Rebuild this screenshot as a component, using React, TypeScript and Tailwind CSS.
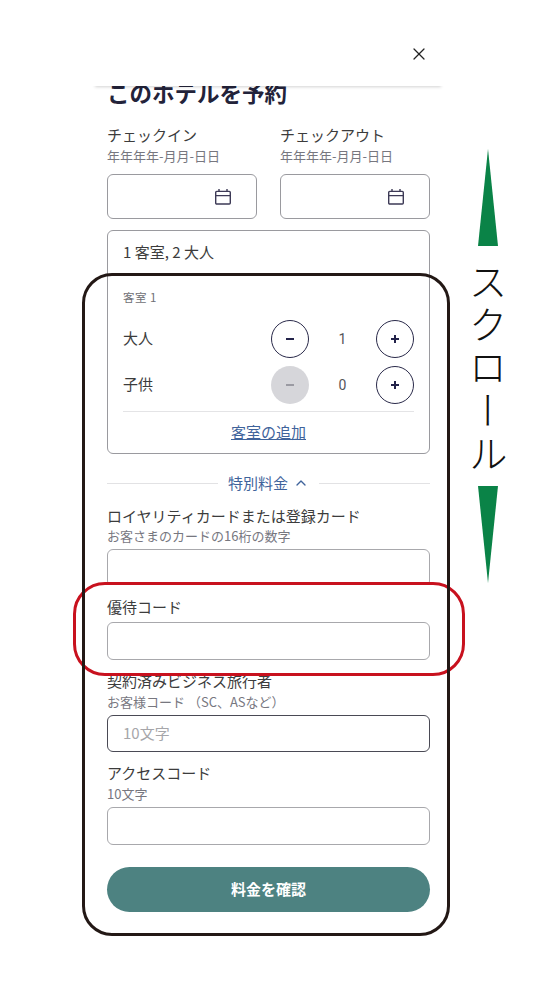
import { ChevronUp, X } from "lucide-react";

const font = { fontFamily: '"Noto Sans CJK JP", sans-serif' };

function CalendarIcon() {
  return (
    <svg width="18" height="18" viewBox="0 0 18 18" fill="none" stroke="#3d3a56" strokeWidth="1.4">
      <rect x="1.7" y="3.4" width="14.6" height="12.6" rx="1" />
      <path d="M1.7 7.6H16.3M5 1V3.4M13 1V3.4" />
    </svg>
  );
}

function DateField({ label }: { label: string }) {
  return (
    <div className="w-[150px]">
      <div className="text-[15px] leading-[20px] text-[#3c3c3c]">{label}</div>
      <div className="mt-[3px] text-[13px] leading-[16px] text-[#77777f]">年年年年-月月-日日</div>
      <div className="mt-[10px] flex h-[45px] items-center justify-end rounded-[6px] border border-[#9a9a9f] pr-[24px]">
        <CalendarIcon />
      </div>
    </div>
  );
}

function Counter({ label, value, disabled }: { label: string; value: number; disabled?: boolean }) {
  return (
    <div className="flex h-[38px] items-center">
      <span className="pb-[2px] text-[15px] text-[#3c3c3c]">{label}</span>
      <div className="ml-auto flex items-center">
        <button
          className={
            disabled
              ? "flex h-[38px] w-[38px] items-center justify-center rounded-full bg-[#d6d6da]"
              : "flex h-[38px] w-[38px] items-center justify-center rounded-full border border-[#2a2a4a]"
          }
        >
          <svg width="10" height="10" viewBox="0 0 10 10" stroke={disabled ? "#9a9aa2" : "#23234a"} strokeWidth="2">
            <path d="M1 5H9" />
          </svg>
        </button>
        <span className="w-[67px] text-center text-[14px] text-[#55555a]" style={{ fontFamily: "Roboto, sans-serif" }}>
          {value}
        </span>
        <button className="flex h-[38px] w-[38px] items-center justify-center rounded-full border border-[#2a2a4a]">
          <svg width="10" height="10" viewBox="0 0 10 10" stroke="#23234a" strokeWidth="2">
            <path d="M1 5H9M5 1V9" />
          </svg>
        </button>
      </div>
    </div>
  );
}

function TextInput({ dark, placeholder }: { dark?: boolean; placeholder?: string }) {
  return (
    <div
      className={
        dark
          ? "flex h-[37px] items-center rounded-[6px] border border-[#4a4a55] pl-[15px] text-[15px] text-[#a6a6aa]"
          : "flex h-[38px] items-center rounded-[6px] border border-[#a8a8ac] pl-[15px] text-[15px] text-[#a6a6aa]"
      }
    >
      {placeholder}
    </div>
  );
}

export default function App() {
  return (
    <div className="relative h-[1000px] w-[537px] overflow-hidden bg-white" style={font}>
      <div className="ml-[107px] w-[323px]">
        <div className="relative z-10 -ml-[15px] flex h-[86px] w-[352px] justify-end bg-white pr-[15px] pt-[44px] shadow-[0_4px_3px_-3px_rgba(0,0,0,0.18)]">
          <X size={20} strokeWidth={1.5} className="text-[#222]" />
        </div>

        <div className="h-[39px] overflow-hidden">
          <h1 className="-mt-[6px] text-[22.5px] leading-[24px] font-bold text-[#23233a]">このホテルを予約</h1>
        </div>

        <div className="flex justify-between">
          <DateField label="チェックイン" />
          <DateField label="チェックアウト" />
        </div>

        <div className="mt-[11px] h-[224px] rounded-[6px] border border-[#9a9a9f] px-[15px]">
          <div className="pt-[11px] text-[15px] leading-[20px] text-[#3c3c3c]">1 客室, 2 大人</div>
          <div className="mt-[28px] text-[11.5px] leading-[14px] tracking-[0.5px] text-[#6f6f75]">客室 1</div>
          <div className="mt-[16px] flex flex-col gap-[8px]">
            <Counter label="大人" value={1} />
            <Counter label="子供" value={0} disabled />
          </div>
          <div className="mt-[7px] border-t border-[#e4e4e6]" />
          <div className="mt-[9px] text-center text-[15px] leading-[22px] text-[#3f639b] underline">客室の追加</div>
        </div>

        <div className="mt-[19px] flex h-[20px] items-center">
          <div className="h-px flex-1 bg-[#e2e2e4]" />
          <div className="flex items-center gap-[5px] px-[10px] text-[15px] text-[#3f639b]">
            特別料金
            <ChevronUp size={16} strokeWidth={2} />
          </div>
          <div className="h-px flex-1 bg-[#e2e2e4]" />
        </div>

        <div className="h-[89px] overflow-hidden">
          <div className="mt-[13px] text-[15px] leading-[20px] text-[#3c3c3c]">ロイヤリティカードまたは登録カード</div>
          <div className="mt-[2px] text-[13px] leading-[16px] text-[#77777f]">お客さまのカードの16桁の数字</div>
          <div className="mt-[5px]">
            <TextInput />
          </div>
        </div>

        <div className="relative z-10 -ml-[34px] -mr-[35px] h-[94px] rounded-[32px] border-3 border-[#c8111e] bg-white pl-[31px] pr-[32px]">
          <div className="pt-[12px] text-[15px] leading-[20px] text-[#3c3c3c]">優待コード</div>
          <div className="mt-[5px]">
            <TextInput />
          </div>
        </div>

        <div className="h-[15px] overflow-hidden">
          <div className="-mt-[5px] text-[15px] leading-[20px] text-[#3c3c3c]">契約済みビジネス旅行者</div>
        </div>
        <div className="mt-[3px] text-[13px] leading-[16px] text-[#77777f]">お客様コード （SC、ASなど）</div>
        <div className="mt-[5px]">
          <TextInput dark placeholder="10文字" />
        </div>

        <div className="mt-[11px] text-[15px] leading-[20px] text-[#3c3c3c]">アクセスコード</div>
        <div className="mt-[3px] text-[13px] leading-[16px] text-[#77777f]">10文字</div>
        <div className="mt-[5px]">
          <TextInput />
        </div>

        <button className="mt-[22px] h-[45px] w-full rounded-full bg-[#4d8281] text-[15px] font-bold text-white">
          料金を確認
        </button>
      </div>

      <div className="pointer-events-none absolute left-[82px] top-[273px] z-20 h-[663px] w-[368px] rounded-[30px] border-3 border-[#231815]" />

      <svg className="absolute left-[478px] top-[149px]" width="20" height="97" viewBox="0 0 20 97">
        <path d="M10 0L20 97H0Z" fill="#0a8347" />
      </svg>
      <div className="absolute left-[467px] top-[262px] text-[39px] leading-[41px] font-light tracking-[4px] text-[#111] [writing-mode:vertical-rl]">
        スクロール
      </div>
      <svg className="absolute left-[478px] top-[486px]" width="20" height="97" viewBox="0 0 20 97">
        <path d="M0 0H20L10 97Z" fill="#0a8347" />
      </svg>
    </div>
  );
}
